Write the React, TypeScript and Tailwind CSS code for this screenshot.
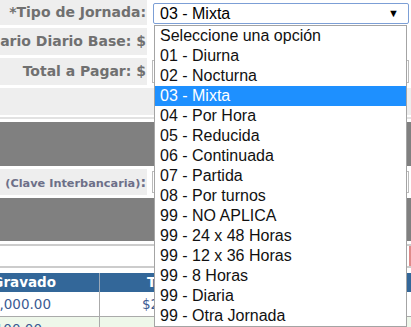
import React from "react";

const opciones = [
  "Seleccione una opción",
  "01 - Diurna",
  "02 - Nocturna",
  "03 - Mixta",
  "04 - Por Hora",
  "05 - Reducida",
  "06 - Continuada",
  "07 - Partida",
  "08 - Por turnos",
  "99 - NO APLICA",
  "99 - 24 x 48 Horas",
  "99 - 12 x 36 Horas",
  "99 - 8 Horas",
  "99 - Diaria",
  "99 - Otra Jornada",
];

const verdana = { fontFamily: "'DejaVu Sans', Verdana, sans-serif" };

const Label = ({ children, h }: { children: React.ReactNode; h: string }) => (
  <div
    className={`w-[147px] ${h} bg-[#eeeeee] flex items-center justify-end overflow-hidden`}
  >
    <span
      className="whitespace-nowrap text-[14px] font-bold text-[#707070] pr-[1px]"
      style={verdana}
    >
      {children}
    </span>
  </div>
);

const App = () => {
  return (
    <div className="relative w-[411px] h-[327px] overflow-hidden bg-white">
      {/* form behind the open select */}
      <div className="flex flex-col">
        <div className="flex h-[25px]">
          <Label h="h-[25px]">*Tipo de Jornada:</Label>
          <div className="flex-1 pl-[6px] pt-[3px] pr-[2px]">
            <div
              className="h-[21px] border border-[#7c9fd6] rounded-[2px] flex items-center justify-between px-[6px] text-[16px] text-black"
              style={{ fontFamily: "'Liberation Sans', Arial, sans-serif" }}
            >
              <span>03 - Mixta</span>
              <span className="text-[11px] mr-[3px]">▼</span>
            </div>
          </div>
        </div>
        <div className="h-[3px]" />
        <div className="flex h-[27px]">
          <Label h="h-[27px]">Salario Diario Base: $</Label>
        </div>
        <div className="h-[3px]" />
        <div className="flex h-[27px]">
          <Label h="h-[27px]">Total a Pagar: $</Label>
          <div className="flex-1 pl-[5px] py-[2px] pr-[2px]">
            <div className="h-full border border-[#bbbbbb] bg-white" />
          </div>
        </div>
        <div className="h-[3px]" />
        <div className="h-[27px] bg-[#eeeeee]" />
        <div className="h-[2px]" />
        <div className="h-[2px] bg-[#e2e2e2]" />
        <div className="h-[3px]" />
        <div className="h-[44px] bg-[#808080]" />
        <div className="h-[3px]" />
        <div className="flex h-[26px]">
          <div className="w-[147px] h-[26px] bg-[#eeeeee] flex items-center justify-end overflow-hidden">
            <span
              className="whitespace-nowrap font-bold text-[#6d7088] pr-[1px]"
              style={verdana}
            >
              <span className="text-[14px] text-[#9a8a70]">CLABE </span>
              <span className="text-[11.3px]">(Clave Interbancaria)</span>
              <span className="text-[14px]">:</span>
            </span>
          </div>
          <div className="flex-1 pl-[5px] py-[2px] pr-[2px]">
            <div className="h-full border border-[#bbbbbb] bg-white" />
          </div>
        </div>
        <div className="h-[3px]" />
        <div className="h-[43px] bg-[#808080]" />
        <div className="h-[3px]" />
        <div className="h-[2px] bg-[#cccccc]" />
        <div className="h-[20px] border-r-2 border-[#e08a8a]" />
        <div className="h-[2px] bg-[#cccccc]" />
        <div className="h-[5px]" />
        <div className="flex flex-col text-[13.5px]" style={verdana}>
          <div className="flex h-[19px] bg-[#336799] text-white font-bold">
            <div className="w-[100px] border-r border-[#9aa8b8] flex items-center justify-end pr-[43px] overflow-hidden whitespace-nowrap">
              Gravado
            </div>
            <div className="flex-1 flex items-center pl-[47px]">T.</div>
          </div>
          <div className="flex h-[25px] text-[#3b5b93] border-b border-[#aaaaaa]">
            <div className="w-[100px] border-r border-[#aaaaaa] flex items-center justify-end pr-[48px] overflow-hidden whitespace-nowrap">
              $2,000.00
            </div>
            <div className="flex-1 flex items-center pl-[42px]">$2</div>
          </div>
          <div className="flex h-[25px] bg-[#eef7ea] text-[#3b5b93]">
            <div className="w-[100px] border-r border-[#aaaaaa] flex items-center justify-end pr-[57px] overflow-hidden whitespace-nowrap">
              $100.00
            </div>
            <div className="flex-1" />
          </div>
        </div>
      </div>

      {/* open option list over the form */}
      <div
        className="absolute left-[154px] top-[25px] w-[253px] bg-white border border-[#a4a4a4] text-[16px] text-[#111111]"
        style={{ fontFamily: "'Liberation Sans', Arial, sans-serif" }}
      >
        {opciones.map((o) => (
          <div
            key={o}
            className={`h-[20px] leading-[20px] pl-[5px] whitespace-nowrap ${
              o === "03 - Mixta" ? "bg-[#1e90ff] text-white" : ""
            }`}
          >
            {o}
          </div>
        ))}
      </div>
    </div>
  );
};

export default App;
